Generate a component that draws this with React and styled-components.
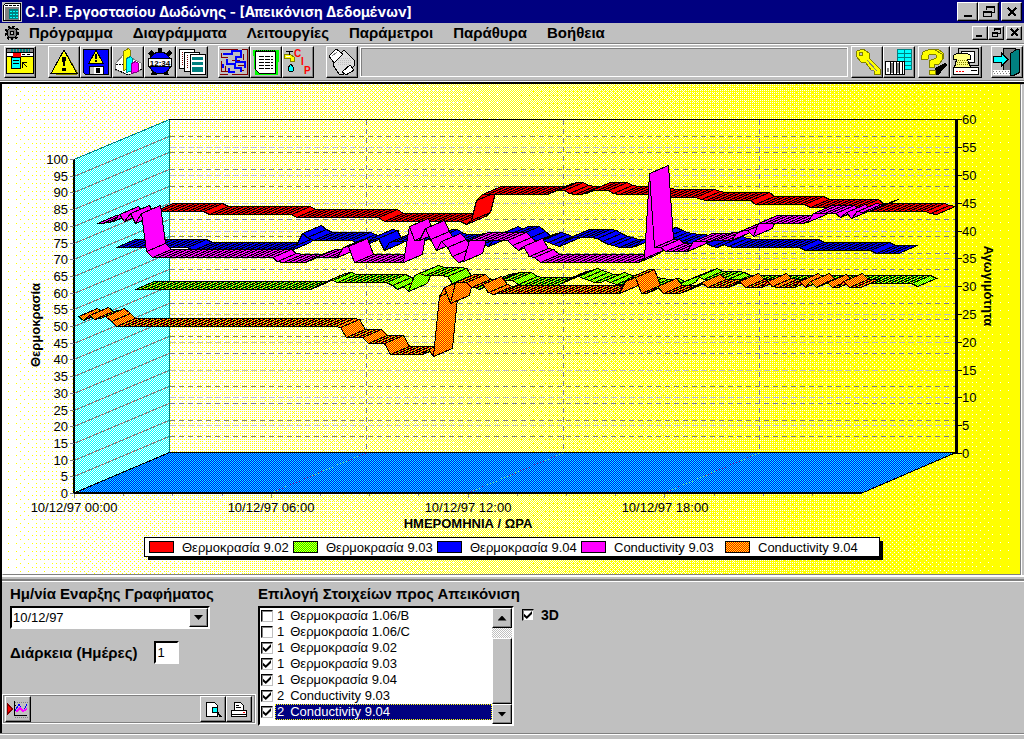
import { useState } from "react";
import styled, { createGlobalStyle, css } from "styled-components";

const menuItems = [
	"Πρόγραμμα",
	"Διαγράμματα",
	"Λειτουργίες",
	"Παράμετροι",
	"Παράθυρα",
	"Βοήθεια",
];

const listItems = [
	{ axis: 1, name: "Θερμοκρασία 1.06/B", checked: false },
	{ axis: 1, name: "Θερμοκρασία 1.06/C", checked: false },
	{ axis: 1, name: "Θερμοκρασία 9.02", checked: true },
	{ axis: 1, name: "Θερμοκρασία 9.03", checked: true },
	{ axis: 1, name: "Θερμοκρασία 9.04", checked: true },
	{ axis: 2, name: "Conductivity 9.03", checked: true },
	{ axis: 2, name: "Conductivity 9.04", checked: true },
];

// key points of the front edge of every ribbon, back series first
const series = [
	{
		name: "Θερμοκρασία 9.02",
		fill: "#ff0000",
		points: [
			[154, 211], [204, 211], [209, 214], [291, 214], [297, 217], [379, 217],
			[384, 221], [461, 221], [466, 224], [471, 220], [476, 201], [482, 194],
			[549, 194], [554, 190], [565, 190], [571, 194], [584, 194], [591, 190],
			[608, 190], [614, 194], [648, 194], [653, 197], [697, 197], [702, 200],
			[750, 200], [755, 204], [805, 204], [810, 207], [859, 207], [864, 211],
			[926, 211], [931, 214], [937, 214],
		],
	},
	{
		name: "Θερμοκρασία 9.03",
		fill: "url(#lime)",
		points: [
			[135, 289], [310, 289], [318, 285], [330, 279], [337, 282], [388, 282],
			[398, 289], [404, 285], [409, 292], [414, 274], [419, 273], [425, 275],
			[446, 275], [452, 283], [470, 286], [480, 289], [488, 283], [501, 280],
			[514, 280], [518, 285], [558, 285], [567, 279], [578, 276], [591, 281],
			[598, 283], [606, 280], [615, 284], [641, 285], [651, 288], [658, 285],
			[666, 290], [676, 290], [680, 283], [698, 276], [703, 279], [724, 279],
			[729, 283], [912, 283], [917, 286], [919, 284],
		],
	},
	{
		name: "Θερμοκρασία 9.04",
		fill: "#0000ff",
		points: [
			[116, 247], [187, 247], [192, 250], [288, 250], [294, 251], [298, 241],
			[302, 233], [311, 240], [354, 240], [362, 246], [373, 237], [379, 238],
			[384, 250], [390, 241], [425, 241], [430, 237], [439, 237], [446, 242],
			[476, 241], [487, 247], [498, 234], [504, 237], [510, 234], [520, 234],
			[530, 243], [541, 240], [553, 244], [558, 247], [568, 237], [594, 237],
			[606, 243], [620, 247], [634, 247], [641, 240], [656, 234], [667, 240],
			[690, 243], [706, 243], [713, 247], [719, 247], [724, 243], [729, 247],
			[800, 247], [805, 250], [870, 250], [875, 253], [898, 253],
		],
	},
	{
		name: "Conductivity 9.03",
		fill: "#ff00ff",
		points: [
			[97, 223], [113, 222], [118, 213], [124, 222], [129, 212], [135, 223],
			[141, 213], [147, 257], [272, 257], [278, 262], [305, 262], [314, 257],
			[338, 257], [343, 247], [348, 245], [354, 262], [403, 262], [409, 223],
			[414, 240], [420, 240], [425, 228], [436, 250], [442, 240], [453, 257],
			[458, 262], [463, 262], [468, 240], [507, 240], [518, 250], [524, 246],
			[529, 257], [535, 257], [540, 262], [639, 262], [644, 258], [649, 173],
			[654, 247], [660, 247], [666, 251], [687, 251], [693, 241], [733, 240],
			[738, 230], [748, 230], [753, 236], [758, 223], [807, 223], [813, 213],
			[835, 213], [841, 218], [846, 212], [851, 218], [857, 211], [866, 212],
			[872, 209], [879, 207],
		],
	},
	{
		name: "Conductivity 9.04",
		fill: "url(#orange)",
		points: [
			[78, 316], [84, 320], [89, 315], [95, 320], [106, 316], [116, 326],
			[340, 326], [346, 337], [363, 337], [368, 343], [384, 343], [389, 354],
			[422, 354], [428, 349], [433, 359], [439, 293], [444, 287], [450, 304],
			[455, 282], [466, 282], [472, 287], [478, 287], [482, 283], [488, 292],
			[493, 294], [499, 293], [620, 293], [626, 277], [635, 276], [641, 293],
			[648, 293], [658, 285], [663, 293], [680, 293], [691, 288], [701, 282],
			[707, 287], [729, 287], [739, 281], [745, 287], [761, 287], [767, 281],
			[773, 287], [794, 287], [799, 281], [805, 287], [810, 281], [816, 287],
			[826, 281], [832, 287], [838, 287], [843, 281], [849, 287], [862, 287],
		],
	},
];

const STEP = 787 / 144;
const DEPTH = { x: 19, y: -8 };

const sample = (points) => {
	const result = [];
	const last = points[points.length - 1][0];
	let k = 0;
	for (let x = points[0][0]; x <= last; x += STEP) {
		while (k < points.length - 2 && points[k + 1][0] < x) k++;
		const [x0, y0] = points[k];
		const [x1, y1] = points[k + 1];
		const t = Math.min(1, (x - x0) / (x1 - x0));
		result.push([Math.round(x) + 0.5, Math.round(y0 + (y1 - y0) * t) + 0.5]);
	}
	return result;
};

const range = (n) => Array.from({ length: n }, (_, i) => i);

// 8x8 ordered dither, used for the white to yellow backdrop
const threshold = (x, y) => {
	let v = 0;
	for (let bit = 0; bit < 3; bit++) {
		const a = (x >> bit) & 1;
		const b = ((y + 1) >> bit) & 1;
		v = v * 4 + ((a ^ b) * 2 + b);
	}
	return v;
};

const ditherPath = (level) => {
	let d = "";
	for (let y = 0; y < 8; y++) {
		for (let x = 0; x < 8; x++) {
			if (threshold(x, y) < level) d += `M${x} ${y}h1v1h-1z`;
		}
	}
	return d;
};

const Checker = ({ id, a, b }) => (
	<pattern id={id} width="2" height="2" patternUnits="userSpaceOnUse">
		<rect width="2" height="2" fill={a} />
		<path d="M0 0h1v1h-1zM1 1h1v1h-1z" fill={b} />
	</pattern>
);

const Backdrop = () => (
	<g>
		<defs>
			{range(64).map((i) => (
				<pattern key={i} id={`d${i}`} width="8" height="8" patternUnits="userSpaceOnUse">
					<path d={ditherPath(i + 1)} fill="#ffff00" />
				</pattern>
			))}
		</defs>
		<rect x="3" y="84" width="1017" height="490" fill="#ffffff" />
		{range(64).map((i) => (
			<rect key={i} x={3 + i * 16} y="84" width="16" height="490" fill={`url(#d${i})`} />
		))}
	</g>
);

const Ribbon = ({ fill, points }) => {
	const front = sample(points);
	return (
		<g fill={fill} stroke="#000000">
			{front.slice(1).map(([x, y], i) => {
				const [px, py] = front[i];
				return (
					<path
						key={i}
						d={`M${px} ${py}L${x} ${y}l${DEPTH.x} ${DEPTH.y}L${px + DEPTH.x} ${py + DEPTH.y}z`}
					/>
				);
			})}
		</g>
	);
};

const leftY = (value) => Math.round(493 - value * 3.34) + 0.5;
const rightY = (value) => Math.round(453 - value * 5.56) + 0.5;

const Chart = () => (
	<ChartSvg viewBox="3 84 1017 490" role="img" aria-label="Απεικόνιση Δεδομένων">
		<defs>
			<Checker id="wall" a="#00ffff" b="#ffffff" />
			<Checker id="floor" a="#0000ff" b="#00ffff" />
			<Checker id="lime" a="#00ff00" b="#ffff00" />
			<Checker id="orange" a="#ff0000" b="#ffff00" />
		</defs>
		<Backdrop />

		<path d="M74 159.5L169.5 119.5V453L74 493z" fill="url(#wall)" stroke="#008080" />
		<path d="M74 493L169.5 452.5H956L862 493z" fill="url(#floor)" stroke="#000000" />
		<path d="M169 119.5H956" stroke="#000000" />

		{range(19).map((i) => {
			const y = leftY((i + 1) * 5);
			return (
				<g key={i} stroke="#808080">
					<path d={`M74 ${y}L169 ${y - 40}`} />
					<path d={`M170 ${y - 40}H956`} strokeDasharray="5 4" />
				</g>
			);
		})}
		{range(11).map((i) => (
			<path key={i} d={`M170 ${rightY((i + 1) * 5)}H956`} stroke="#c0c0c0" strokeDasharray="6 3" />
		))}
		{[366, 563, 759].map((x) => (
			<g key={x} stroke="#808080">
				<path d={`M${x + 0.5} 120V452`} strokeDasharray="5 4" />
				<path d={`M${x - 95} 493L${x} 453`} strokeDasharray="1 2" />
			</g>
		))}

		{series.map((s) => (
			<Ribbon key={s.name} fill={s.fill} points={s.points} />
		))}

		<path d="M74 159V493" stroke="#000000" strokeWidth="2" />
		<path d="M74 493H862" stroke="#000000" strokeWidth="2" />
		<path d="M956.5 119V454" stroke="#000000" strokeWidth="3" />

		<g fontSize="13">
			{range(21).map((i) => (
				<g key={i}>
					<path d={`M70 ${leftY(i * 5)}H74`} stroke="#808080" />
					<text x="68" y={leftY(i * 5) + 4} textAnchor="end">{i * 5}</text>
				</g>
			))}
			{range(13).map((i) => (
				<g key={i}>
					<path d={`M958 ${rightY(i * 5)}H962`} stroke="#000000" />
					<text x="962" y={rightY(i * 5) + 4}>{i * 5}</text>
				</g>
			))}
			{range(16).map((i) => (
				<path key={i} d={`M${Math.round(74 + i * 49.2) + 0.5} 494v${i % 4 ? 2 : 4}`} stroke="#808080" />
			))}
			{["00:00", "06:00", "12:00", "18:00"].map((time, i) => (
				<text key={time} x={74 + i * 197} y="512" textAnchor="middle">{`10/12/97 ${time}`}</text>
			))}
		</g>
		<g fontSize="13" fontWeight="bold" textAnchor="middle">
			<text x="468" y="528">ΗΜΕΡΟΜΗΝΙΑ / ΩΡΑ</text>
			<text transform="translate(40 325) rotate(-90)">Θερμοκρασία</text>
			<text transform="translate(984 286) rotate(90)">Αγωγιμότητα</text>
		</g>

		<rect x="148" y="541" width="735" height="19" fill="#000000" />
		<rect x="144.5" y="537.5" width="735" height="19" fill="#ffffff" stroke="#000000" />
		{series.map((s, i) => (
			<g key={s.name} fontSize="13">
				<rect x={149.5 + i * 144} y="541.5" width="24" height="11" fill={s.fill} stroke="#000000" />
				<text x={182 + i * 144} y="552">{s.name}</text>
			</g>
		))}
	</ChartSvg>
);

const icons = {
	app: (
		<>
			<path fill="#000" d="M0 0h28v26H0z" />
			<path fill="#808080" d="M1 1h26v3H1z" />
			<path stroke="#008080" strokeWidth="3" strokeDasharray="2 1" d="M5 2.500h19" />
			<path fill="#fff" d="M1 5h26v3H1z" />
			<path stroke="#000" strokeDasharray="3 2" d="M16 6.500h10" />
			<path fill="#ff0" d="M1 9h26v16H1z" />
			<path fill="#f00" d="M7 5h8v4H7z" />
			<path fill="#0ff" stroke="#000" d="M5.500 9.500h9v11h-9z" />
			<path stroke="#000" d="M7 12.500h6M7 15.500h6" />
			<path fill="none" stroke="#000" d="M16.500 20v-5.500H21M17 15l4 4" />
		</>
	),
	warning: (
		<>
			<path fill="#808000" d="M16 4l12 21-2 2H6z" />
			<path fill="#ff0" stroke="#000" d="M14 2L27 25.500H1z" />
			<path fill="#000" d="M12 9h4l-1 9h-2zM12 20h4v3h-4z" />
		</>
	),
	disk: (
		<>
			<path fill="#00f" stroke="#000" d="M1.500 1.500h25v25h-23l-2-2z" />
			<path fill="#ff0" stroke="#000" d="M14 2l7 13H7z" />
			<path fill="#000" d="M13 6h2v5h-2zM13 12h2v2h-2z" />
			<path fill="#fff" stroke="#000" d="M7.500 18.500h14v8h-14z" />
			<path fill="#c0c0c0" d="M8 19h4v7H8z" />
			<path fill="#000" d="M14 20h4v5h-4z" />
		</>
	),
	bars: (
		<>
			<path fill="#fff" stroke="#808080" d="M1 16L10 6l17 9v7L15 27 1 22z" />
			<path stroke="#000" strokeDasharray="2 1" fill="none" d="M1 21l13 6 14-6M2 16h12" />
			<path fill="#ff0" stroke="#808000" d="M9.500 3.500l5-3 2 2v18l-7 2z" />
			<path fill="#0ff" stroke="#008080" d="M12.500 10.500l4-2 2 2v12l-6 2z" />
			<path fill="#f0f" stroke="#800080" d="M17.500 15.500l4-2 3 2v8l-7 2z" />
		</>
	),
	clock: (
		<>
			<path fill="#000" d="M12 0h4v4h-4zM2 5l4-3 3 4-4 3zM19 6l4-4 3 3-3 4zM6 24h5v3H5zM18 24h4l1 3h-5z" />
			<circle cx="14" cy="15" r="11" fill="#00f" stroke="#000" />
			<path fill="#fff" stroke="#000" d="M2.500 10.500h23v8h-23z" />
			<text x="14" y="18" fontSize="8" fontWeight="bold" textAnchor="middle">12:34</text>
		</>
	),
	pages: (
		<>
			<path fill="#fff" stroke="#000" d="M1.500 1.500h15v19h-15z" />
			<path fill="#fff" stroke="#000" d="M6.500 4.500h15v19h-15z" />
			<path fill="#fff" stroke="#000" d="M12.500 6.500h15v20h-15z" />
			<path stroke="#800000" strokeDasharray="1 1" d="M4.500 4v14M9.500 7v14" />
			<path fill="#008080" d="M14 9h11v3H14zM14 14h11v3H14zM14 19h11v5H14z" />
		</>
	),
	maze: (
		<g fill="none">
			<path stroke="#800000" d="M0 1.500h18M22 1.500h5.500V26M0 26.500h8M12 26.500h16M1.500 5v4H8M1.500 13v10H5M5.500 18v5h4M23.500 6v6M12 12.500h8M18 17.500h6M20 22.500h4" />
			<path stroke="#00f" strokeWidth="2" d="M3 6h9V3h9v6h-5v5h9v6M7 11v5h8v4h6v4M3 20v-4M9 20v4h6" />
		</g>
	),
	notepad: (
		<>
			<path fill="#0f0" d="M1 2h26l-1 25H3z" />
			<path fill="#fff" stroke="#000" d="M3.500 3.500h20v22h-16l-4-4z" />
			<path stroke="#000" strokeWidth="2" strokeDasharray="1 1" d="M4 3h19" />
			<path stroke="#000" strokeDasharray="5 1" d="M7 8.500h14M7 11.500h14M7 14.500h14M7 17.500h14M7 20.500h14" />
		</>
	),
	tap: (
		<>
			<path fill="#ff0" stroke="#808000" d="M.5 6.500h6l4 3v4h-4v-3h-6z" />
			<path stroke="#000" d="M2 3.500h7M5.500 4v3" />
			<path fill="#fff" d="M2 8h4v1H2z" />
			<path fill="#0ff" stroke="#000" d="M7 16l3 4-1 3H5l-1-3z" />
			<g fill="#f00" fontSize="10" fontWeight="bold">
				<text x="10" y="9">C</text>
				<text x="17" y="17">I</text>
				<text x="20" y="26">P</text>
			</g>
		</>
	),
	eraser: (
		<>
			<path fill="#e0e0e0" stroke="#000" d="M8 10l8-8 11 11-1 5-11 9-4-1-6-9z" />
			<path fill="#fff" stroke="#000" d="M1 8l7-7 7 5-9 9z" />
			<path fill="none" stroke="#808080" d="M4 8l5-4" />
			<path fill="none" stroke="#c0c0c0" strokeDasharray="1 1" d="M11 10.500h12M10 12.500h14M10 14.500h14M10 16.500h12" />
			<path fill="#fff" stroke="#000" d="M14 24l8-7 4 5-8 5z" />
		</>
	),
	key: (
		<>
			<path fill="#ff0" stroke="#808000" d="M4 3l6-2 6 4 1 6 10 10v5h-6v-3l-3-1-5-7-5-1-5-6z" />
			<circle cx="8" cy="6" r="2" fill="#c0c0c0" stroke="#808000" />
			<path stroke="#808080" fill="none" d="M14 12l10 11M18 22h3" />
		</>
	),
	rack: (
		<>
			<path fill="#0ff" stroke="#008080" d="M12.500 1.500h14v20h-14zM12 5.500h14M12 9.500h14M12 13.500h14M12 17.500h14M19.500 2v19" />
			<path fill="#fff" stroke="#000" d="M.5 13.500h19v13H.5z" />
			<path stroke="#000" d="M5.500 14v12M8.500 14v12M11.500 14v12M14.500 14v12M17.500 14v12" />
			<path fill="#808080" d="M6 15h2v10H6zM12 15h2v10h-2zM2 20h2v4H2z" />
		</>
	),
	help: (
		<>
			<path fill="#000" d="M15 20l10-5 3 2-4 3-5 7h-5z" />
			<path fill="#ff0" stroke="#808000" d="M1 10l2-6 7-3h8l5 4v6l-4 5h-5v3H9v-6l7-3V7l-3-1-4 1-1 4-6 1zM9.500 22.500h6v4h-6z" />
			<path stroke="#808000" fill="none" d="M15 2l7 4v5" />
		</>
	),
	computer: (
		<>
			<path fill="#c0c0c0" stroke="#000" d="M6.500.5h20v17h-20z" />
			<path fill="#fff" stroke="#000" d="M9.500 3.500h13v11h-13z" />
			<path fill="#fff" stroke="#000" d="M1.500 19.500h25v7h-25z" />
			<path stroke="#f00" strokeDasharray="2 1" d="M4 23.500h8" />
			<path stroke="#000" d="M19 22.500h6" />
			<path fill="#ffff80" stroke="#000" d="M1.500 7.500l3-2h11l3 2v4h-3l3 8H2.500l2-8h-3z" />
			<path stroke="#808000" strokeDasharray="1 1" d="M6 12.500h9M5 14.500h11M5 16.500h12" />
		</>
	),
	exit: (
		<>
			<path fill="#808080" stroke="#000" d="M10.500.5h12v23h-12z" />
			<path fill="#fff" d="M0 22h18v5H0z" />
			<path stroke="#808080" strokeDasharray="1 2" d="M0 23.500h18M1 25.500h16" />
			<path fill="#008080" stroke="#000" d="M17.500 5.500l6-4h3v23l-6 3h-3z" />
			<path fill="#0ff" stroke="#000" d="M0 8.500h8v-4l7 7-7 7v-4H0z" />
		</>
	),
};

const ToolIcon = ({ name }) => (
	<Pixels width="28" height="28" viewBox="0 0 28 28">
		{icons[name]}
	</Pixels>
);

const Tools = ({ names }) =>
	names.map((name) => (
		<ToolButton key={name} type="button" aria-label={name}>
			<ToolIcon name={name} />
		</ToolButton>
	));

const WindowButtons = ({ small }) => (
	<ButtonRow>
		<FrameButton type="button" $small={small} aria-label="Minimize">
			<Pixels width="12" height="12" viewBox="0 0 12 12">
				<path fill="#000" d={small ? "M2 8h6v2H2z" : "M2 9h8v2H2z"} />
			</Pixels>
		</FrameButton>
		<FrameButton type="button" $small={small} aria-label="Restore">
			<Pixels width="12" height="12" viewBox="0 0 12 12">
				{small ? (
					<path fill="none" stroke="#000" d="M4.500 4V1.500h6v5H8M4 2.500h7M2.500 5.500h5v4h-5zM2 6.500h6" />
				) : (
					<path fill="none" stroke="#000" d="M3.500 4V.5h8v6H9M3 1.500h9M.5 5.500h8v5h-8zM0 6.500h9" />
				)}
			</Pixels>
		</FrameButton>
		<FrameButton type="button" $small={small} $apart aria-label="Close">
			<Pixels width="12" height="12" viewBox="0 0 12 12">
				<path stroke="#000" strokeWidth="2" d={small ? "M3 2l7 7M10 2L3 9" : "M2 2l8 8M10 2l-8 8"} />
			</Pixels>
		</FrameButton>
	</ButtonRow>
);

const App = () => {
	const [items, setItems] = useState(listItems);
	const [threeD, setThreeD] = useState(true);
	const [days, setDays] = useState("1");

	const toggle = (index) => {
		setItems(items.map((item, i) => (i === index ? { ...item, checked: !item.checked } : item)));
	};

	return (
		<Window>
			<GlobalStyle />
			<TitleBar>
				<Pixels width="20" height="20" viewBox="0 0 20 20">
					<path fill="#c0c0c0" d="M0 0h20v20H0z" />
					<path fill="#fff" stroke="#000" d="M1.500 3.500l2-2h15v17h-17z" />
					<path fill="#808080" d="M3 5h14v13H3z" />
					<path fill="#008080" d="M7 7h9v10H7z" />
					<path stroke="#0ff" strokeDasharray="2 1" d="M8 9.500h8M8 12.500h8M8 15.500h8" />
					<path stroke="#000" strokeDasharray="3 1" d="M3 3.500h14" />
				</Pixels>
				<Title>C.I.P. Εργοστασίου Δωδώνης - [Απεικόνιση Δεδομένων]</Title>
				<WindowButtons />
			</TitleBar>

			<MenuBar>
				<Pixels width="16" height="16" viewBox="0 0 16 16">
					<circle cx="8" cy="8" r="6" fill="#808080" stroke="#000" strokeWidth="3" strokeDasharray="2 2" />
					<circle cx="8" cy="8" r="5" fill="#808080" stroke="#000" />
					<circle cx="8" cy="8" r="2" fill="#c0c0c0" stroke="#000" />
				</Pixels>
				<Menu>
					{menuItems.map((item) => (
						<MenuItem key={item} type="button">
							{item}
						</MenuItem>
					))}
				</Menu>
				<WindowButtons small />
			</MenuBar>

			<Toolbar>
				<ToolGroup $gap={12}>
					<Tools names={["app"]} />
				</ToolGroup>
				<ToolGroup $gap={10}>
					<Tools names={["warning", "disk", "bars", "clock", "pages"]} />
				</ToolGroup>
				<ToolGroup $gap={12}>
					<Tools names={["maze", "notepad", "tap"]} />
				</ToolGroup>
				<ToolGroup $gap={2}>
					<Tools names={["eraser"]} />
				</ToolGroup>
				<MessagePanel />
				<ToolGroup $gap={3}>
					<Tools names={["key", "rack"]} />
				</ToolGroup>
				<ToolGroup $gap={9}>
					<Tools names={["help", "computer"]} />
				</ToolGroup>
				<ToolGroup $gap={0}>
					<Tools names={["exit"]} />
				</ToolGroup>
			</Toolbar>

			<Child>
				<ChartPane>
					<Chart />
				</ChartPane>
				<Splitter />
				<Controls>
					<Settings>
						<Field>
							<Label htmlFor="start">Ημ/νία Εναρξης Γραφήματος</Label>
							<Combo>
								<DateSelect id="start">
									<option>10/12/97</option>
								</DateSelect>
								<ArrowBox>
									<Arrow />
								</ArrowBox>
							</Combo>
							<DurationRow>
								<Label htmlFor="days">Διάρκεια (Ημέρες)</Label>
								<DaysInput id="days" value={days} onChange={(e) => setDays(e.target.value)} />
							</DurationRow>
						</Field>
						<ActionBar>
							<ActionButton type="button" aria-label="Draw chart">
								<Pixels width="22" height="20" viewBox="0 0 22 20">
									<path fill="#f00" stroke="#800000" d="M.5 5l5 5-5 5z" />
									<path fill="none" stroke="#000" d="M7.500 2v14.500H20M7 6.500h2M7 10.500h2" />
									<path fill="none" stroke="#808080" strokeDasharray="1 1" d="M8 3.500h13M8 18.500h13" />
									<path fill="none" stroke="#00f" d="M8 12l4-7 4 8 4-8" />
									<path fill="none" stroke="#f0f" strokeWidth="2" d="M9 13l4-4 3 3 4-2" />
								</Pixels>
							</ActionButton>
							<ButtonRow>
								<ActionButton type="button" aria-label="Preview">
									<Pixels width="22" height="20" viewBox="0 0 22 20">
										<path fill="#fff" stroke="#000" d="M4.500 3.500h8l3 3v11h-11z" />
										<circle cx="13" cy="11" r="3" fill="#0ff" stroke="#000" />
										<path stroke="#000" strokeWidth="2" d="M15 13l4 5" />
									</Pixels>
								</ActionButton>
								<ActionButton type="button" aria-label="Print">
									<Pixels width="22" height="20" viewBox="0 0 22 20">
										<path fill="#fff" stroke="#000" d="M6.500 11V3.500h6l3 3V11zM3.500 11.500h15v6h-15z" />
										<path stroke="#000" d="M8 6.500h3M8 8.500h5M3 15.500h16" />
										<path stroke="#f00" d="M15 13.500h2" />
									</Pixels>
								</ActionButton>
							</ButtonRow>
						</ActionBar>
					</Settings>

					<Selection>
						<Label as="span">Επιλογή Στοιχείων προς Απεικόνιση</Label>
						<ListBox>
							<Rows>
								{items.map((item, i) => (
									<Row key={item.name}>
										<CheckBox type="checkbox" checked={item.checked} onChange={() => toggle(i)} />
										<RowText $selected={i === items.length - 1}>
											<span>{item.axis}</span>
											<span>{item.name}</span>
										</RowText>
									</Row>
								))}
							</Rows>
							<ScrollBar>
								<ScrollButton type="button" aria-label="Up">
									<Arrow $up />
								</ScrollButton>
								<Track>
									<Thumb />
								</Track>
								<ScrollButton type="button" aria-label="Down">
									<Arrow />
								</ScrollButton>
							</ScrollBar>
						</ListBox>
					</Selection>

					<ThreeD>
						<CheckBox type="checkbox" checked={threeD} onChange={(e) => setThreeD(e.target.checked)} />
						3D
					</ThreeD>
				</Controls>
			</Child>
			<Footer />
		</Window>
	);
};

const GlobalStyle = createGlobalStyle`
	* {
		box-sizing: border-box;
	}

	body {
		margin: 0;
		background: #c0c0c0;
		font-family: "Liberation Sans", Arial, sans-serif;
		font-size: 13px;
		color: #000000;
	}

	button, input, select {
		font-family: inherit;
		font-size: inherit;
		color: inherit;
	}
`;

const raised = css`
	border: 1px solid;
	border-color: #ffffff #000000 #000000 #ffffff;
	box-shadow: inset -1px -1px 0 #808080;
	background: #c0c0c0;
`;

const sunken = css`
	border: 2px solid;
	border-color: #000000 #ffffff #ffffff #000000;
	background: #ffffff;
`;

const Window = styled.div`
	display: flex;
	flex-direction: column;
	min-height: 100vh;
	background: #c0c0c0;
`;

const Pixels = styled.svg`
	display: block;
	flex: none;
	shape-rendering: crispEdges;
`;

const TitleBar = styled.header`
	display: flex;
	align-items: center;
	height: 23px;
	padding: 0 2px;
	background: #000080;
`;

const Title = styled.h1`
	flex: 1;
	margin: 0 0 0 3px;
	font-family: Inter, "Liberation Sans", sans-serif;
	font-size: 14px;
	font-weight: bold;
	line-height: 16px;
	color: #ffffff;
	white-space: nowrap;
`;

const ButtonRow = styled.div`
	display: flex;
`;

const FrameButton = styled.button`
	${raised}
	display: flex;
	align-items: center;
	justify-content: center;
	width: ${(props) => (props.$small ? 16 : 21)}px;
	height: ${(props) => (props.$small ? 14 : 19)}px;
	margin-left: ${(props) => (props.$apart ? 2 : 0)}px;
	padding: 0;
`;

const MenuBar = styled.div`
	display: flex;
	align-items: center;
	height: 20px;
	padding: 0 2px 0 4px;
`;

const Menu = styled.nav`
	display: flex;
	flex: 1;
	gap: 20px;
	margin-left: 9px;
`;

const MenuItem = styled.button`
	padding: 0;
	border: 0;
	background: none;
	font-size: 15px;
	font-weight: bold;
	line-height: 18px;
`;

const Toolbar = styled.div`
	display: flex;
	height: 39px;
	padding: 1px 1px 0 4px;
	border-top: 1px solid #808080;
	border-bottom: 1px solid #ffffff;
	box-shadow: inset 0 1px 0 #ffffff, inset 0 -1px 0 #808080;
`;

const ToolGroup = styled.div`
	display: flex;
	align-items: center;
	height: 34px;
	margin-right: ${(props) => props.$gap}px;
`;

const ToolButton = styled.button`
	${raised}
	width: 32px;
	height: 32px;
	padding: 1px;
`;

const MessagePanel = styled.div`
	flex: 1;
	height: 30px;
	margin: 2px 3px 0 0;
	border: 1px solid;
	border-color: #ffffff;
	box-shadow: inset 1px 1px 0 #808080;
`;

const Child = styled.main`
	border-top: 2px solid #000000;
	border-left: 2px solid #000000;
`;

const ChartPane = styled.div`
	margin-right: 3px;
	border: solid;
	border-width: 0 1px 1px 1px;
	border-color: #808080 #808080 #808080 #ffffff;
	box-shadow: 1px 1px 0 #ffffff;
`;

const ChartSvg = styled.svg`
	display: block;
	width: 100%;
	shape-rendering: crispEdges;
	font-family: "Liberation Sans", Arial, sans-serif;
`;

const Splitter = styled.div`
	height: 7px;
	border-top: 2px solid #ffffff;
	border-bottom: 1px solid #ffffff;
	box-shadow: inset 0 -2px 0 #808080;
`;

const Controls = styled.section`
	display: flex;
	align-items: flex-start;
	height: 151px;
`;

const Settings = styled.div`
	display: flex;
	flex-direction: column;
	justify-content: space-between;
	width: 254px;
	height: 142px;
	margin-right: 2px;
`;

const Field = styled.div`
	display: flex;
	flex-direction: column;
	align-items: flex-start;
	padding: 4px 0 0 8px;
`;

const Label = styled.label`
	font-size: 15px;
	font-weight: bold;
	line-height: 16px;
	white-space: nowrap;
`;

const Combo = styled.div`
	${sunken}
	display: flex;
	width: 200px;
	height: 23px;
	margin-top: 4px;
`;

const DateSelect = styled.select`
	flex: 1;
	appearance: none;
	padding: 0 1px;
	border: 0;
	background: #ffffff;
`;

const ArrowBox = styled.span`
	${raised}
	display: flex;
	align-items: center;
	justify-content: center;
	width: 19px;
	pointer-events: none;
`;

const Arrow = styled.i`
	width: 9px;
	height: 5px;
	background: #000000;
	clip-path: ${(props) => (props.$up ? "polygon(50% 0, 100% 100%, 0 100%)" : "polygon(0 0, 100% 0, 50% 100%)")};
`;

const DurationRow = styled.div`
	display: flex;
	align-items: center;
	gap: 17px;
	margin-top: 12px;
`;

const DaysInput = styled.input`
	${sunken}
	width: 25px;
	height: 23px;
	padding: 0 1px;
`;

const ActionBar = styled.div`
	display: flex;
	justify-content: space-between;
	padding: 1px 3px 1px 2px;
	border: 1px solid #ffffff;
	outline: 1px solid #808080;
	outline-offset: -2px;
`;

const ActionButton = styled.button`
	${raised}
	width: 26px;
	height: 26px;
	padding: 1px;
`;

const Selection = styled.div`
	display: flex;
	flex-direction: column;
	width: 256px;
	padding-top: 4px;
`;

const ListBox = styled.div`
	${sunken}
	display: flex;
	height: 120px;
	margin-top: 4px;
`;

const Rows = styled.div`
	flex: 1;
`;

const Row = styled.label`
	display: flex;
	align-items: center;
	gap: 2px;
	height: 16px;
	padding-left: 1px;
`;

const RowText = styled.span`
	display: flex;
	flex: 1;
	gap: 6px;
	padding-left: 2px;
	line-height: 16px;
	white-space: nowrap;
	color: ${(props) => (props.$selected ? "#ffffff" : "#000000")};
	background: ${(props) => (props.$selected ? "#000080" : "transparent")};
	outline: ${(props) => (props.$selected ? "1px dotted #ffff00" : "none")};
	outline-offset: -1px;
`;

const CheckBox = styled.input`
	flex: none;
	display: flex;
	align-items: center;
	justify-content: center;
	appearance: none;
	width: 12px;
	height: 12px;
	margin: 0;
	border: 1px solid;
	border-color: #000000 #c0c0c0 #c0c0c0 #000000;
	box-shadow: inset 1px 1px 0 #808080;
	background: #ffffff;

	&:checked::before {
		content: "";
		width: 8px;
		height: 8px;
		background: #000000;
		clip-path: polygon(0 35%, 35% 65%, 100% 0, 100% 38%, 35% 100%, 0 70%);
	}
`;

const ScrollBar = styled.div`
	display: flex;
	flex-direction: column;
	width: 20px;
`;

const ScrollButton = styled.button`
	${raised}
	display: flex;
	align-items: center;
	justify-content: center;
	height: 20px;
	padding: 0;
`;

const Track = styled.div`
	flex: 1;
	padding-top: 10px;
	background: conic-gradient(#ffffff 25%, #c0c0c0 0 50%, #ffffff 0 75%, #c0c0c0 0) 0 0 / 2px 2px;
`;

const Thumb = styled.div`
	${raised}
	height: 100%;
`;

const ThreeD = styled.label`
	display: flex;
	align-items: center;
	gap: 7px;
	margin: 25px 0 0 8px;
	font-size: 14px;
	font-weight: bold;
	line-height: 16px;
`;

const Footer = styled.footer`
	flex: 1;
	border-top: 1px solid #808080;
	box-shadow: inset 0 1px 0 #ffffff;
`;

export default App;
